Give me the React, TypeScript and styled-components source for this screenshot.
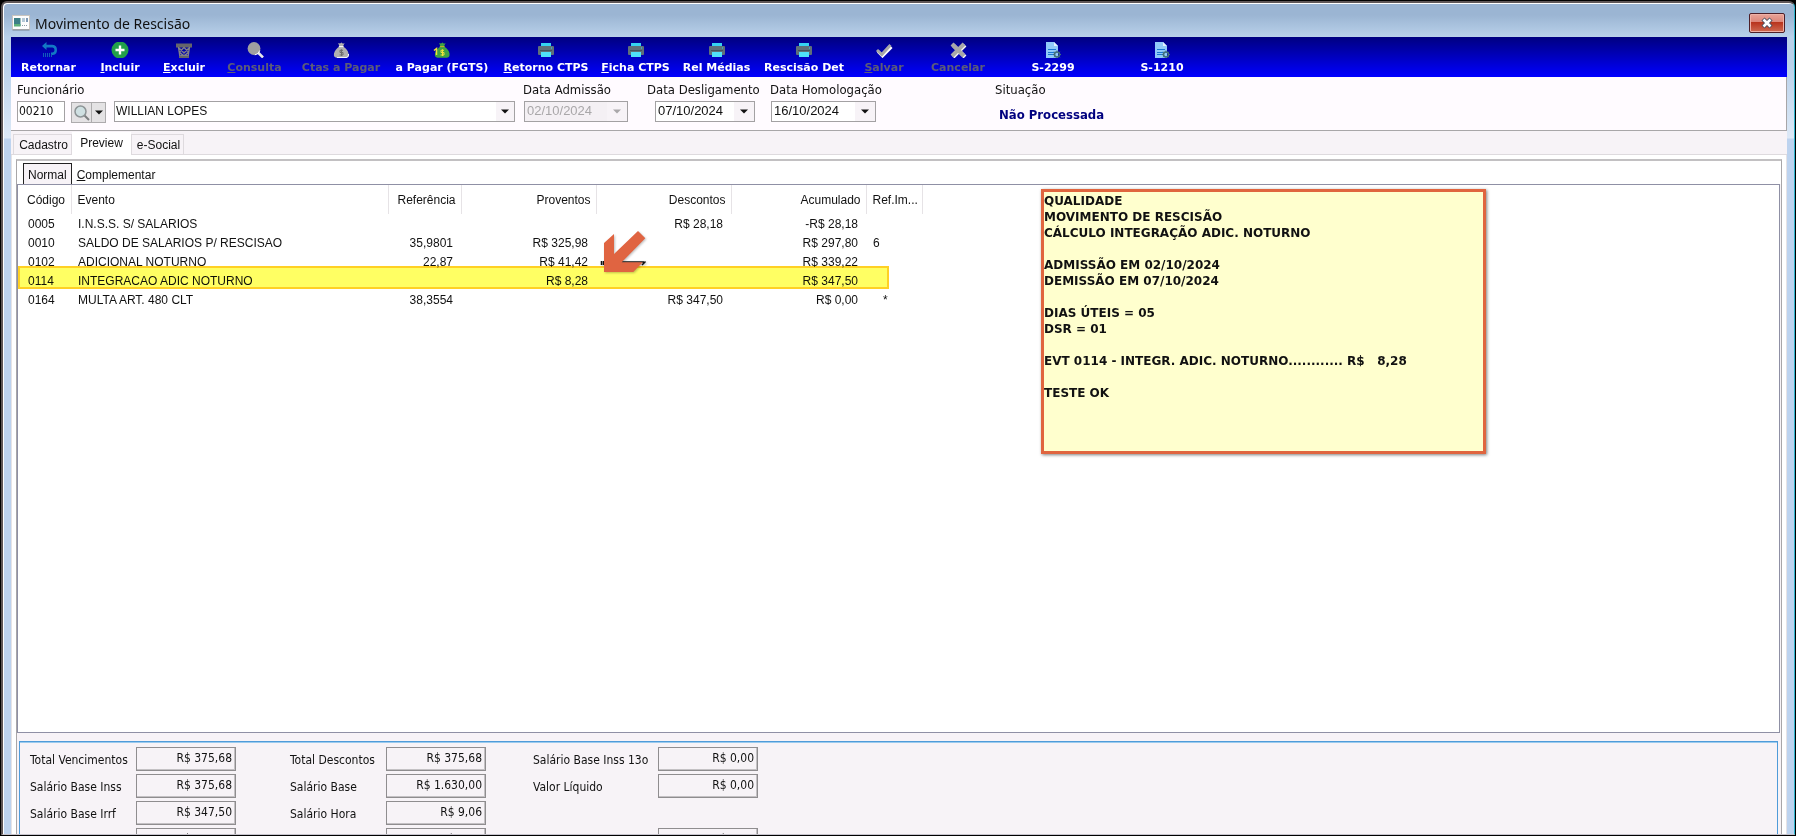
import React, { ReactNode } from "react";
import styled, { createGlobalStyle } from "styled-components";

const tahoma = `"DejaVu Sans Condensed", "DejaVu Sans", sans-serif`;
const verdana = `"DejaVu Sans", sans-serif`;
const msSans = `"Liberation Sans", sans-serif`;

const GlobalStyle = createGlobalStyle`
  *, *::before, *::after { box-sizing: border-box; }
  body { margin: 0; background: #000; color: #111; }
  button, input, select { margin: 0; font: inherit; color: inherit; border-radius: 0; }
`;

/* ---------- window frame ---------- */

const Desktop = styled.div`
  height: 100vh;
  padding: 1px;
  background: #000;
`;

const WindowFrame = styled.main`
  display: flex;
  flex-direction: column;
  height: 100%;
  padding: 1px 7px 0 8px;
  border: solid #5e5657;
  border-width: 2px 1px 1px 2px;
  border-right-color: #2fb4cc;
  border-bottom-color: #c6c3cc;
  border-radius: 6px 6px 0 0;
  box-shadow: inset 1px 1px 0 #fff;
  background: linear-gradient(#9bb5d3 0, #9bb5d3 12px, #b9d1ea 34px, #b9d1ea 60px, #dde9f7 135px, #bdd3ef 136px, #bdd3ef 100%);
  overflow: hidden;
`;

const TitleBar = styled.header`
  display: flex;
  flex: none;
  align-items: center;
  gap: 5px;
  height: 33px;
  padding: 4px 2px 0 1px;
`;

const Title = styled.h1`
  flex: 1;
  margin: 0;
  padding-top: 2px;
  font: 400 14px/20px "Noto Sans", sans-serif;
  color: #111;
`;

const CloseButton = styled.button`
  display: flex;
  align-items: center;
  justify-content: center;
  width: 36px;
  height: 20px;
  padding: 0;
  border: 1px solid #4d1f28;
  border-radius: 2px;
  box-shadow: inset 0 0 0 1px #eeb0a6;
  background: linear-gradient(#e9a499 0, #dc8578 45%, #b8331c 46%, #cf6a52 100%);
`;

const Client = styled.div`
  display: flex;
  flex: 1;
  flex-direction: column;
  min-height: 0;
  background: #f7f3f7;
`;

/* ---------- toolbar ---------- */

const Toolbar = styled.nav`
  display: flex;
  flex: none;
  height: 40px;
  background: linear-gradient(#000080, #0000ff);
`;

const ToolButton = styled.button<{ $width: number }>`
  display: flex;
  flex: none;
  flex-direction: column;
  align-items: center;
  width: ${(p) => p.$width}px;
  padding: 5px 0 0;
  border: 0;
  background: none;
  font: 700 11px/14px ${verdana};
  white-space: nowrap;
  color: #fff;
  gap: 3px;
  &:disabled { color: #5c5c78; }
`;

/* ---------- employee header ---------- */

const EmployeeBar = styled.form`
  display: grid;
  flex: none;
  grid-template-columns: 506px 124px 123px 225px auto;
  height: 54px;
  padding: 4px 6px 0;
  border: solid #a8a6a8;
  border-width: 0 1px 1px 0;
  background: #fffbff;
`;

const Field = styled.div`
  display: flex;
  flex-direction: column;
  gap: 2px;
`;

const FieldLabel = styled.label`
  font: 13px/18px ${tahoma};
  white-space: nowrap;
`;

const ControlRow = styled.div<{ $indent?: number }>`
  display: flex;
  padding-left: ${(p) => p.$indent ?? 0}px;
  font: 12px/18px ${msSans};
`;

const CodeInput = styled.input`
  width: 48px;
  height: 21px;
  margin-right: 6px;
  padding: 0 1px 2px;
  border: 1px solid #a3a1a3;
  background: #fff;
  font: 12px/18px ${tahoma};
`;

const SearchSplit = styled.div`
  display: flex;
  width: 35px;
  height: 21px;
  margin: 1px 8px 0 0;
  border: 1px solid #adabad;
  background: #e4e2e4;
`;

const SplitButton = styled.button<{ $grow?: boolean }>`
  display: flex;
  flex: ${(p) => (p.$grow ? "1" : "0 0 14px")};
  align-items: center;
  justify-content: center;
  padding: 0;
  border: 0;
  border-left: ${(p) => (p.$grow ? "0" : "1px solid #adabad")};
  background: none;
`;

const ComboBox = styled.div`
  position: relative;
  width: 401px;
  height: 21px;
`;

const ComboSelect = styled.select`
  width: 100%;
  height: 100%;
  padding: 0 20px 2px 1px;
  border: 1px solid #a3a1a3;
  appearance: none;
  background: #fff;
`;

const ComboArrow = styled.span`
  position: absolute;
  inset: 1px 1px 1px auto;
  display: flex;
  align-items: center;
  justify-content: center;
  width: 18px;
  background: #f7f3f7;
  pointer-events: none;
`;

const DateBox = styled.div<{ $width: number; $disabled?: boolean }>`
  display: flex;
  width: ${(p) => p.$width}px;
  height: 21px;
  border: 1px solid #a3a1a3;
  background: ${(p) => (p.$disabled ? "#f4f0f4" : "#fff")};
  color: ${(p) => (p.$disabled ? "#a9a7a9" : "#111")};
`;

const DateInput = styled.input`
  flex: 1;
  min-width: 0;
  padding: 0 0 2px 2px;
  border: 0;
  background: none;
  font: 13px/18px ${msSans};
`;

const DropButton = styled.button`
  display: flex;
  flex: none;
  align-items: center;
  justify-content: center;
  width: 20px;
  padding: 0;
  border: 0;
  background: #f7f3f7;
`;

const Status = styled.output`
  padding: 4px 0 0 4px;
  font: 700 13px/20px ${tahoma};
  color: #00007f;
  white-space: nowrap;
`;

/* ---------- tabs ---------- */

const TabStrip = styled.div`
  display: flex;
  flex: none;
  align-items: flex-end;
  height: 24px;
  padding-left: 2px;
  border-bottom: 1px solid #dedade;
`;

const Tab = styled.button<{ $active?: boolean; $width: number }>`
  width: ${(p) => p.$width}px;
  height: ${(p) => (p.$active ? 23 : 20)}px;
  margin-bottom: ${(p) => (p.$active ? -1 : 0)}px;
  padding: ${(p) => (p.$active ? "0 0 2px" : "0 0 0 2px")};
  border: solid #dedade;
  border-width: ${(p) => (p.$active ? 0 : "1px 1px 0 1px")};
  background: ${(p) => (p.$active ? "#fff" : "#f7f3f7")};
  font: 12px/16px ${msSans};
`;

const TabPage = styled.section`
  display: flex;
  flex: 1;
  min-height: 0;
  padding: 4px 4px 0;
  border: solid #e6e3e6;
  border-width: 0 1px;
  background: #fff;
`;

const PageFrame = styled.div`
  display: flex;
  flex: 1;
  flex-direction: column;
  min-width: 0;
  border: solid #a8a6a8;
  border-width: 2px 1px 0 1px;
  border-top-color: #c2c0c2;
  background: #f7f3f7;
`;

const SubTabs = styled.div`
  display: flex;
  flex: none;
  align-items: flex-end;
  height: 23px;
  padding-left: 6px;
  background: #fff;
`;

const SubTab = styled.button<{ $active?: boolean }>`
  height: 21px;
  padding: 2px 4px 0;
  border: solid ${(p) => (p.$active ? "#222" : "transparent")};
  border-width: 1px 1px 0 1px;
  background: ${(p) => (p.$active ? "#f7f3f7" : "transparent")};
  font: 12px/16px ${msSans};
`;

/* ---------- events list ---------- */

const ListArea = styled.div`
  position: relative;
  flex: 1;
  min-height: 0;
  margin-right: 1px;
  border: 1px solid #8f90a5;
  background: #fff;
  overflow: hidden;
`;

const EventTable = styled.table`
  width: 904px;
  border-collapse: collapse;
  table-layout: fixed;
  font: 12px/18px ${msSans};
  white-space: nowrap;
`;

const HeadCell = styled.th<{ $right?: boolean }>`
  height: 29px;
  padding: ${(p) => (p.$right ? "1px 5px 0 0" : "1px 0 0 6px")};
  border-right: 1px solid #e6e3e6;
  font-weight: 400;
  text-align: ${(p) => (p.$right ? "right" : "left")};
  &:first-child { padding-left: 9px; }
`;

const Cell = styled.td<{ $right?: boolean }>`
  height: 19px;
  padding: ${(p) => (p.$right ? "1px 8px 0 0" : "1px 0 0 7px")};
  text-align: ${(p) => (p.$right ? "right" : "left")};
  white-space: pre;
  &:first-child { padding-left: 10px; }
`;

const Highlight = styled.div`
  position: absolute;
  top: 81px;
  left: 0;
  width: 871px;
  height: 23px;
  border: 2px solid #ffd024;
  background: #ffff63;
  mix-blend-mode: multiply;
  pointer-events: none;
`;

const Pointer = styled.svg`
  position: absolute;
  top: 45px;
  left: 582px;
  filter: drop-shadow(1px 1px 1px rgba(0, 0, 0, 0.25));
`;

const Note = styled.aside`
  position: absolute;
  top: 4px;
  left: 1023px;
  width: 445px;
  min-height: 265px;
  padding-top: 1px;
  border: 3px solid #e0653f;
  box-shadow: 1px 1px 3px rgba(0, 0, 0, 0.5);
  background: #ffffce;
  font: 700 12px/16px ${verdana};
  white-space: pre;
`;

/* ---------- totals ---------- */

const Totals = styled.section`
  display: grid;
  flex: 0 0 93px;
  grid-template-columns: 106px 154px 96px 147px 125px 100px;
  grid-auto-rows: 24px;
  row-gap: 3px;
  margin: 8px 3px 0 2px;
  padding: 5px 10px 0;
  border: solid #4f9bd9;
  border-width: 1px 1px 0 1px;
  box-shadow: inset 0 1px 0 #9ccbee;
  overflow: hidden;
`;

const TotalLabel = styled.label`
  padding-top: 2px;
  font: 12px/22px ${tahoma};
  white-space: nowrap;
`;

const TotalBox = styled.input`
  width: 100px;
  height: 24px;
  padding: 0 3px 2px;
  border: 1px solid #8f8d8f;
  box-shadow: inset -1px -1px 0 #c4c1c4;
  background: #f7f3f7;
  font: 12px/20px ${tahoma};
  text-align: right;
`;

/* ---------- icons ---------- */

const Icon = ({ children }: { children: ReactNode }) => (
  <svg width="18" height="16" viewBox="0 0 18 16" aria-hidden="true">{children}</svg>
);

const UndoIcon = () => (
  <Icon>
    <path d="M6.500 0 2 4l4.500 4V5.500H12.500Q14.500 5.600 14.500 8T12.500 10.500H11V13H13Q17 12.500 17 8 17 3 12.500 2.800H6.500Z" fill="#1279c4" />
    <path d="M3.500 11v4M5.500 11v4M7.500 11v4M9.500 11v4M11.500 12v3" stroke="#1060b8" />
  </Icon>
);

const AddIcon = () => (
  <Icon>
    <circle cx="9" cy="8" r="8.500" fill="#22a04a" />
    <path d="M9 3.500v9M4.500 8h9" stroke="#fff" strokeWidth="2.400" />
  </Icon>
);

const TrashIcon = () => (
  <Icon>
    <path d="M1 1.500h16v4H1z" fill="#66666a" />
    <path d="M3.500 5 5 15h8l1.500-10M4 6l8.500 8.500M14 6l-8.500 8.500M9 5.500 13.500 10 9 14.500 4.500 10Z" fill="none" stroke="#808088" strokeWidth="1.400" />
    <path d="M4 14h10v2H4z" fill="#66666a" />
  </Icon>
);

const SearchIcon = () => (
  <Icon>
    <path d="m12 10.500 5 5" stroke="#e8e8e8" strokeWidth="2.500" />
    <circle cx="8" cy="6.500" r="6.400" fill="#a0a0a0" />
    <path d="M13.800 8.500a6 6 0 0 1-5 4.400" fill="none" stroke="#fff" />
  </Icon>
);

const BagBody = ({ fill }: { fill: string }) => (
  <path d="M6.200 1 8 1.600 9.500.4l1.500 1.300L12.600 1 11 4.400Q15.800 7.200 16.500 11.500 17 15.500 14 15.700H4.500Q1.300 15.500 2 11.500 3 7.200 7.400 4.400Z" fill={fill} />
);

const GreyBagIcon = () => (
  <Icon>
    <BagBody fill="#b0b0b0" />
    <path d="M6.800 4.600h4.800M16.600 12q.4 3.500-2.600 3.600H5" stroke="#fff" fill="none" />
    <path d="M11 8.300H8v2.200h3v2.500H7.600M9.500 7.300v6.700" fill="none" stroke="#6c6c6c" />
  </Icon>
);

const GreenBagIcon = () => (
  <Icon>
    <BagBody fill="#3fa343" />
    <path d="M6.800 4.600h4.800" stroke="#c5b42a" />
    <path d="M1 8.500 3.500 6.500V13" fill="none" stroke="#f2e13a" strokeWidth="1.500" />
    <path d="M11 8.300H8v2.200h3v2.500H7.600M9.500 7.300v6.700" fill="none" stroke="#f2e13a" />
  </Icon>
);

const PrinterIcon = () => (
  <Icon>
    <path d="M4 1h10v4H4z" fill="#35d3f2" />
    <rect x="1" y="4" width="16" height="9" rx="1" fill="#5f7079" />
    <path d="M4 10h10v5H4z" fill="#4fe0fa" />
    <path d="M3 8.500h12" stroke="#44545c" />
    <path d="M14 6h1" stroke="#35d3f2" />
  </Icon>
);

const CheckIcon = () => (
  <Icon>
    <path d="m3 9.500 4.500 4.500L16.500 5" fill="none" stroke="#fff" strokeWidth="3" />
    <path d="m2 8 4.800 4.500L15.500 3" fill="none" stroke="#a8a8a8" strokeWidth="3" />
  </Icon>
);

const CancelIcon = () => (
  <Icon>
    <path d="m4 3 12 12M16 3 4 15" stroke="#f4f4f4" strokeWidth="4" />
    <path d="m3 2 12 12M15 2 3 14" stroke="#a8a8a8" strokeWidth="4" />
  </Icon>
);

const DocIcon = () => (
  <Icon>
    <path d="M2 0h8l4 4v12H2z" fill="#90caf9" />
    <path d="M10 0v4h4z" fill="#e3f2fd" />
    <path d="M4 7.500h8M4 10.500h6M4 12.500h5" stroke="#1976d2" />
    <circle cx="13" cy="12.500" r="2.500" fill="none" stroke="#3f6f7c" strokeWidth="1.600" />
    <path d="M13 8.500v2M13 14.500v2M9 12.500h2M15 12.500h2M10.200 9.700l1.400 1.400M14.400 13.900l1.400 1.400M15.800 9.700l-1.400 1.400M11.600 13.900l-1.400 1.400" stroke="#3f6f7c" />
  </Icon>
);

const AppIcon = () => (
  <svg width="18" height="16" viewBox="0 0 18 16" aria-hidden="true">
    <rect x=".5" y=".5" width="17" height="14" fill="#fdfdfd" stroke="#c9c4be" />
    <path d="M2 3h6.500v8H2z" fill="#3c7f86" />
    <path d="M2 9h6.500v2.500H2z" fill="#5cb07a" />
    <path d="M10 3h3v4h-3z" fill="#b5c9d6" />
    <path d="M14 3h2v4h-2z" fill="#7d99b5" />
    <path d="M10 10.500h1M12 10.500h1M14 10.500h1" stroke="#8b9aa3" />
    <path d="M.5 15h17" stroke="#77838f" />
  </svg>
);

const LensIcon = () => (
  <svg width="18" height="18" viewBox="0 0 18 18" aria-hidden="true">
    <path d="m11 11 5 5" stroke="#7c7f80" strokeWidth="2" />
    <circle cx="7.500" cy="7.500" r="5.500" fill="#cfe0e2" stroke="#8d9496" strokeWidth="1.500" />
  </svg>
);

const Caret = () => (
  <svg width="8" height="5" viewBox="0 0 8 5" aria-hidden="true">
    <path d="M0 .5h8L4 4.500Z" fill="currentColor" />
  </svg>
);

/* ---------- data ---------- */

type Tool = { label: string; hotkey?: boolean; width: number; icon: ReactNode; disabled?: boolean };

const tools: Tool[] = [
  { label: "Retornar", width: 75, icon: <UndoIcon /> },
  { label: "Incluir", hotkey: true, width: 68, icon: <AddIcon /> },
  { label: "Excluir", hotkey: true, width: 60, icon: <TrashIcon /> },
  { label: "Consulta", hotkey: true, width: 81, icon: <SearchIcon />, disabled: true },
  { label: "Ctas a Pagar", width: 92, icon: <GreyBagIcon />, disabled: true },
  { label: "a Pagar (FGTS)", width: 110, icon: <GreenBagIcon /> },
  { label: "Retorno CTPS", hotkey: true, width: 98, icon: <PrinterIcon /> },
  { label: "Ficha CTPS", hotkey: true, width: 81, icon: <PrinterIcon /> },
  { label: "Rel Médias", width: 81, icon: <PrinterIcon /> },
  { label: "Rescisão Det", width: 94, icon: <PrinterIcon /> },
  { label: "Salvar", hotkey: true, width: 66, icon: <CheckIcon />, disabled: true },
  { label: "Cancelar", width: 82, icon: <CancelIcon />, disabled: true },
  { label: "S-2299", width: 108, icon: <DocIcon /> },
  { label: "S-1210", width: 110, icon: <DocIcon /> },
];

const columns = [
  { name: "Código", width: 53 },
  { name: "Evento", width: 317 },
  { name: "Referência", width: 73, right: true },
  { name: "Proventos", width: 135, right: true },
  { name: "Descontos", width: 135, right: true },
  { name: "Acumulado", width: 135, right: true },
  { name: "Ref.Im...", width: 56 },
];

const events = [
  ["0005", "I.N.S.S. S/ SALARIOS", "", "", "R$ 28,18", "-R$ 28,18", ""],
  ["0010", "SALDO DE SALARIOS P/ RESCISAO", "35,9801", "R$ 325,98", "", "R$ 297,80", "6"],
  ["0102", "ADICIONAL NOTURNO", "22,87", "R$ 41,42", "", "R$ 339,22", ""],
  ["0114", "INTEGRACAO ADIC NOTURNO", "", "R$ 8,28", "", "R$ 347,50", ""],
  ["0164", "MULTA ART. 480 CLT", "38,3554", "", "R$ 347,50", "R$ 0,00", "   *"],
];

const totals: ([string, string] | null)[] = [
  ["Total Vencimentos", "R$ 375,68"], ["Total Descontos", "R$ 375,68"], ["Salário Base Inss 13o", "R$ 0,00"],
  ["Salário Base Inss", "R$ 375,68"], ["Salário Base", "R$ 1.630,00"], ["Valor Líquido", "R$ 0,00"],
  ["Salário Base Irrf", "R$ 347,50"], ["Salário Hora", "R$ 9,06"], null,
  ["Salário Base Fgts", "R$ 375,68"], ["", "R$ 0,00"], ["Salário Líquido", "R$ 0,00"],
];

const noteText = `QUALIDADE
MOVIMENTO DE RESCISÃO
CÁLCULO INTEGRAÇÃO ADIC. NOTURNO

ADMISSÃO EM 02/10/2024
DEMISSÃO EM 07/10/2024

DIAS ÚTEIS = 05
DSR = 01

EVT 0114 - INTEGR. ADIC. NOTURNO............ R$   8,28

TESTE OK`;

const Hotkey = ({ text }: { text: string }) => (
  <span><u>{text[0]}</u>{text.slice(1)}</span>
);

type DateFieldProps = { id: string; label: string; value: string; width: number; indent?: number; disabled?: boolean };

const DateField = ({ id, label, value, width, indent, disabled }: DateFieldProps) => (
  <Field>
    <FieldLabel htmlFor={id}>{label}</FieldLabel>
    <ControlRow $indent={indent}>
      <DateBox $width={width} $disabled={disabled}>
        <DateInput id={id} defaultValue={value} disabled={disabled} />
        <DropButton type="button" aria-label={`Abrir ${label}`} disabled={disabled}><Caret /></DropButton>
      </DateBox>
    </ControlRow>
  </Field>
);

export default function App() {
  return (
    <Desktop>
      <GlobalStyle />
      <WindowFrame>
        <TitleBar>
          <AppIcon />
          <Title>Movimento de Rescisão</Title>
          <CloseButton aria-label="Fechar">
            <svg width="14" height="12" viewBox="0 0 14 12" aria-hidden="true">
              <path d="m3 2 8 8M11 2 3 10" stroke="#4a5060" strokeWidth="4.500" />
              <path d="m3.500 2.500 7 7M10.500 2.500l-7 7" stroke="#fff" strokeWidth="2.600" />
            </svg>
          </CloseButton>
        </TitleBar>

        <Client>
          <Toolbar>
            {tools.map((t) => (
              <ToolButton key={t.label} $width={t.width} disabled={t.disabled}>
                {t.icon}
                {t.hotkey ? <Hotkey text={t.label} /> : <span>{t.label}</span>}
              </ToolButton>
            ))}
          </Toolbar>

          <EmployeeBar>
            <Field>
              <FieldLabel htmlFor="codigo">Funcionário</FieldLabel>
              <ControlRow>
                <CodeInput id="codigo" defaultValue="00210" />
                <SearchSplit>
                  <SplitButton type="button" $grow aria-label="Pesquisar"><LensIcon /></SplitButton>
                  <SplitButton type="button" aria-label="Opções de pesquisa"><Caret /></SplitButton>
                </SearchSplit>
                <ComboBox>
                  <ComboSelect aria-label="Nome do funcionário"><option>WILLIAN LOPES</option></ComboSelect>
                  <ComboArrow><Caret /></ComboArrow>
                </ComboBox>
              </ControlRow>
            </Field>
            <DateField id="admissao" label="Data Admissão" value="02/10/2024" width={104} indent={1} disabled />
            <DateField id="desligamento" label="Data Desligamento" value="07/10/2024" width={100} indent={8} />
            <DateField id="homologacao" label="Data Homologação" value="16/10/2024" width={105} indent={1} />
            <Field>
              <FieldLabel htmlFor="situacao">Situação</FieldLabel>
              <Status id="situacao">Não Processada</Status>
            </Field>
          </EmployeeBar>

          <TabStrip role="tablist">
            <Tab role="tab" $width={59}>Cadastro</Tab>
            <Tab role="tab" $width={59} $active aria-selected="true">Preview</Tab>
            <Tab role="tab" $width={53}>e-Social</Tab>
          </TabStrip>

          <TabPage>
            <PageFrame>
              <SubTabs role="tablist">
                <SubTab role="tab" $active aria-selected="true">Normal</SubTab>
                <SubTab role="tab"><Hotkey text="Complementar" /></SubTab>
              </SubTabs>

              <ListArea>
                <EventTable>
                  <colgroup>
                    {columns.map((c) => <col key={c.name} width={c.width} />)}
                  </colgroup>
                  <thead>
                    <tr>
                      {columns.map((c) => <HeadCell key={c.name} scope="col" $right={c.right}>{c.name}</HeadCell>)}
                    </tr>
                  </thead>
                  <tbody>
                    {events.map((row) => (
                      <tr key={row[0]}>
                        {row.map((value, i) => <Cell key={i} $right={columns[i].right}>{value}</Cell>)}
                      </tr>
                    ))}
                  </tbody>
                </EventTable>
                <Highlight />
                <Pointer width="48" height="46" viewBox="0 0 48 46" aria-hidden="true">
                  <path d="M1.500 31v4M3.500 31v4M14 32h30M42 35l3.500-3.500" stroke="#111" strokeWidth="1.500" />
                  <path d="M4 13 14 4v20L38 1l7.300 7.300-23.600 24h21L33.300 42H4Z" fill="#e06441" />
                </Pointer>
                <Note>{noteText}</Note>
              </ListArea>

              <Totals>
                {totals.map((t, i) =>
                  t ? (
                    <React.Fragment key={i}>
                      <TotalLabel htmlFor={`total-${i}`}>{t[0]}</TotalLabel>
                      <TotalBox id={`total-${i}`} readOnly value={t[1]} />
                    </React.Fragment>
                  ) : (
                    <React.Fragment key={i}><span /><span /></React.Fragment>
                  )
                )}
              </Totals>
            </PageFrame>
          </TabPage>
        </Client>
      </WindowFrame>
    </Desktop>
  );
}
